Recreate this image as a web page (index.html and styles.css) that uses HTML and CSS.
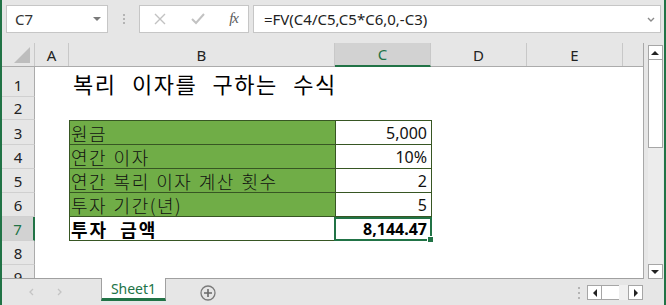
FILE: index.html
```html
<!DOCTYPE html>
<html>
<head>
    <title>복리 이자 - Excel</title>
    <link rel="stylesheet" href="styles.css">
</head>
<body>
    <div class="app">
        <div class="formula-bar">
            <div class="name-box">
                <span>C7</span>
                <svg class="name-drop" width="8" height="4" viewBox="0 0 8 4"><path d="M0 0h8L4 4z" fill="#7a7a7a"/></svg>
            </div>
            <div class="grip"><i></i><i></i><i></i></div>
            <div class="fx-box">
                <svg width="12" height="12" viewBox="0 0 12 12"><path d="M1 1l10 10M11 1L1 11" stroke="#c2c2c2" stroke-width="1.4" fill="none"/></svg>
                <svg width="14" height="12" viewBox="0 0 14 12"><path d="M1 6l4 4 8-9" stroke="#c2c2c2" stroke-width="2" fill="none"/></svg>
                <span class="fx">fx</span>
            </div>
            <div class="formula-input">
                <span>=FV(C4/C5,C5*C6,0,-C3)</span>
                <svg width="8" height="5" viewBox="0 0 8 5"><path d="M1 1l3 3 3-3" stroke="#8a8a8a" stroke-width="1.4" fill="none"/></svg>
            </div>
        </div>

        <div class="workspace">
            <div class="grid">
                <div class="col-heads">
                    <div class="corner"><span class="corner-tri"></span></div>
                    <div class="ch col-a">A</div>
                    <div class="ch col-b">B</div>
                    <div class="ch col-c active">C</div>
                    <div class="ch col-d">D</div>
                    <div class="ch col-e">E</div>
                    <div class="ch col-rest"></div>
                </div>

                <div class="row r1">
                    <div class="rh">1</div>
                    <div class="cell col-a"></div>
                    <div class="cell col-b title">복리 이자를 구하는 수식</div>
                </div>
                <div class="row r2">
                    <div class="rh">2</div>
                </div>
                <div class="row r3 first">
                    <div class="rh">3</div>
                    <div class="cell col-a"></div>
                    <div class="cell col-b label">원금</div>
                    <div class="cell col-c num">5,000</div>
                </div>
                <div class="row">
                    <div class="rh">4</div>
                    <div class="cell col-a"></div>
                    <div class="cell col-b label">연간 이자</div>
                    <div class="cell col-c num">10%</div>
                </div>
                <div class="row">
                    <div class="rh">5</div>
                    <div class="cell col-a"></div>
                    <div class="cell col-b label">연간 복리 이자 계산 횟수</div>
                    <div class="cell col-c num">2</div>
                </div>
                <div class="row">
                    <div class="rh">6</div>
                    <div class="cell col-a"></div>
                    <div class="cell col-b label">투자 기간(년)</div>
                    <div class="cell col-c num">5</div>
                </div>
                <div class="row">
                    <div class="rh active">7</div>
                    <div class="cell col-a"></div>
                    <div class="cell col-b result">투자 금액</div>
                    <div class="cell col-c num selected">8,144.47<span class="handle"></span></div>
                </div>
                <div class="row">
                    <div class="rh">8</div>
                </div>
                <div class="row">
                    <div class="rh">9</div>
                </div>
            </div>

            <div class="vscroll">
                <div class="sbtn"><svg width="8" height="4" viewBox="0 0 8 4"><path d="M0 4h8L4 0z" fill="#222"/></svg></div>
                <div class="vthumb"></div>
                <div class="vtrack"></div>
                <div class="sbtn"><svg width="8" height="4" viewBox="0 0 8 4"><path d="M0 0h8L4 4z" fill="#222"/></svg></div>
            </div>
        </div>

        <div class="tabbar">
            <div class="tab-nav">
                <svg width="5" height="8" viewBox="0 0 5 8"><path d="M4 1L1 4l3 3" stroke="#c4c4c4" stroke-width="1.3" fill="none"/></svg>
                <svg width="5" height="8" viewBox="0 0 5 8"><path d="M1 1l3 3-3 3" stroke="#c4c4c4" stroke-width="1.3" fill="none"/></svg>
            </div>
            <div class="tab">Sheet1</div>
            <svg class="add-sheet" width="16" height="16" viewBox="0 0 16 16">
                <circle cx="8" cy="8" r="7" stroke="#7a7a7a" stroke-width="1.3" fill="none"/>
                <path d="M8 4v8M4 8h8" stroke="#6a6a6a" stroke-width="1.6"/>
            </svg>
            <div class="spacer"></div>
            <div class="grip"><i></i><i></i><i></i></div>
            <div class="hscroll">
                <div class="sbtn"><svg width="4" height="8" viewBox="0 0 4 8"><path d="M4 0v8L0 4z" fill="#222"/></svg></div>
                <div class="hthumb"></div>
                <div class="htrack"></div>
                <div class="sbtn"><svg width="4" height="8" viewBox="0 0 4 8"><path d="M0 0v8l4-4z" fill="#222"/></svg></div>
            </div>
        </div>
    </div>
</body>
</html>
```

FILE: styles.css
```css
:root {
    --xl-green: #217346;
    --fill-green: #70ad47;
    --line-green: #375623;
    --chrome: #e6e6e6;
    --head-line: #c8c8c8;
    --box-line: #c6c6c6;
}

body {
    margin: 0;
    padding: 0;
    background: var(--chrome);
    font-family: "Noto Sans", "Open Sans", sans-serif;
    color: #222;
}

.app {
    width: 666px;
    height: 305px;
    box-sizing: border-box;
    border-left: 2px solid var(--xl-green);
    border-right: 2px solid var(--xl-green);
    overflow: hidden;
}

/* formula bar */
.formula-bar {
    height: 43px;
    box-sizing: border-box;
    padding: 5px 0 0 4px;
    display: flex;
    align-items: flex-start;
}

.name-box,
.fx-box,
.formula-input {
    height: 28px;
    box-sizing: border-box;
    background: #fff;
    border: 1px solid var(--box-line);
    display: flex;
    align-items: center;
}

.name-box {
    width: 102px;
    padding: 0 6px 0 8px;
    justify-content: space-between;
    font-size: 15px;
    color: #333;
}

.grip {
    width: 31px;
    display: flex;
    flex-direction: column;
    align-items: center;
    gap: 2px;
    padding-top: 9px;
}

.grip i {
    width: 2px;
    height: 2px;
    background: #b4b4b4;
}

.fx-box {
    width: 110px;
    padding: 0 10px 0 14px;
    justify-content: space-between;
}

.fx {
    font-family: "Liberation Serif", serif;
    font-style: italic;
    font-size: 15px;
    color: #5a5a5a;
    letter-spacing: -1px;
    margin-top: -2px;
}

.formula-input {
    width: 408px;
    margin-left: 4px;
    padding: 0 5px 0 10px;
    justify-content: space-between;
    font-size: 15px;
    color: #222;
}

/* sheet */
.workspace {
    display: flex;
    height: 236px;
}

.grid {
    width: 642px;
    height: 236px;
    box-sizing: border-box;
    border-right: 1px solid #a8a8a8;
    border-bottom: 1px solid #a0a0a0;
    background: #fff;
    overflow: hidden;
}

.col-heads {
    display: flex;
    height: 24px;
    background: var(--chrome);
    border-bottom: 1px solid #ababab;
    box-sizing: border-box;
}

.corner {
    width: 33px;
    box-sizing: border-box;
    border-right: 1px solid var(--head-line);
    position: relative;
}

.corner-tri {
    position: absolute;
    right: 4px;
    bottom: 3px;
    width: 0;
    height: 0;
    border-left: 16px solid transparent;
    border-bottom: 16px solid #bdbdbd;
}

.ch {
    box-sizing: border-box;
    border-right: 1px solid var(--head-line);
    display: flex;
    align-items: center;
    justify-content: center;
    font-size: 15px;
    color: #222;
}

.ch.col-a { width: 34px; }
.ch.col-b { width: 266px; }
.ch.col-c { width: 96px; }
.ch.col-d { width: 96px; }
.ch.col-e { width: 96px; }
.ch.col-rest { width: 20px; border-right: none; }

.ch.active {
    background: #d2d2d2;
    color: var(--xl-green);
    border-bottom: 2px solid var(--xl-green);
    margin-bottom: -1px;
}

.row {
    display: flex;
    height: 24px;
}

.row.r1 { height: 30px; }
.row.r2 { height: 23px; }
.row.r3 { height: 25px; }

.rh {
    width: 33px;
    box-sizing: border-box;
    background: var(--chrome);
    border-right: 1px solid #ababab;
    border-bottom: 1px solid #d0d0d0;
    display: flex;
    align-items: flex-end;
    justify-content: center;
    padding-bottom: 3px;
    font-size: 15px;
    line-height: 16px;
    color: #222;
}

.rh.active {
    background: #d2d2d2;
    color: var(--xl-green);
    border-right: 2px solid var(--xl-green);
}

.cell {
    box-sizing: border-box;
    display: flex;
    align-items: flex-end;
    white-space: nowrap;
}

.cell.col-a { width: 34px; }
.cell.col-b { width: 266px; }
.cell.col-c { width: 97px; }

.title {
    font-family: "Noto Sans CJK KR", sans-serif;
    font-size: 22px;
    line-height: 26px;
    word-spacing: 9px;
    letter-spacing: 1.5px;
    color: #000;
    padding-left: 4px;
    padding-bottom: 1px;
}

.label,
.result {
    font-family: "Noto Sans CJK KR", sans-serif;
    font-size: 18px;
    line-height: 22px;
    letter-spacing: 1.5px;
    word-spacing: 1px;
    padding-left: 1px;
    border-left: 1px solid var(--line-green);
    border-bottom: 1px solid var(--line-green);
    color: #111;
}

.label {
    background: var(--fill-green);
    font-weight: 300;
}

.result {
    background: #fff;
    font-weight: 700;
    word-spacing: 6px;
    letter-spacing: 2px;
    color: #000;
}

.first .label,
.first .num {
    border-top: 1px solid var(--line-green);
}

.num {
    justify-content: flex-end;
    font-family: "Noto Sans", sans-serif;
    font-size: 16px;
    line-height: 20px;
    padding: 0 4px 1px 0;
    border-left: 1px solid var(--line-green);
    border-right: 1px solid var(--line-green);
    border-bottom: 1px solid var(--line-green);
    color: #111;
}

.num.selected {
    position: relative;
    border: 2px solid var(--xl-green);
    margin-left: -1px;
    width: 98px;
    font-weight: 700;
    color: #000;
    padding-right: 3px;
    padding-bottom: 0;
}

.handle {
    position: absolute;
    right: -4px;
    bottom: -4px;
    width: 5px;
    height: 5px;
    background: var(--xl-green);
    border: 1px solid #fff;
}

/* vertical scrollbar */
.vscroll {
    width: 20px;
    display: flex;
    flex-direction: column;
    align-items: center;
    padding: 2px 0 0 2px;
    box-sizing: border-box;
}

.sbtn {
    width: 15px;
    height: 15px;
    box-sizing: border-box;
    border: 1px solid #a6a6a6;
    background: #fff;
    display: flex;
    align-items: center;
    justify-content: center;
}

.vthumb {
    width: 15px;
    height: 88px;
    box-sizing: border-box;
    border: 1px solid #a6a6a6;
    border-top: none;
    background: #fff;
}

.vtrack {
    flex: 1;
    width: 15px;
    background: #ececec;
}

/* sheet tabs */
.tabbar {
    height: 27px;
    display: flex;
    align-items: flex-start;
}

.tab-nav {
    width: 99px;
    display: flex;
    gap: 23px;
    padding: 9px 0 0 27px;
    box-sizing: border-box;
}

.tab {
    width: 65px;
    height: 23px;
    margin-top: -1px;
    box-sizing: border-box;
    background: #fff;
    border-left: 1px solid #a0a0a0;
    border-right: 1px solid #a0a0a0;
    border-bottom: 3px solid var(--xl-green);
    color: var(--xl-green);
    font-size: 14px;
    display: flex;
    align-items: center;
    justify-content: center;
    padding-top: 1px;
}

.add-sheet {
    margin: 6px 0 0 34px;
}

.spacer {
    flex: 1;
}

.tabbar .grip {
    width: 16px;
    padding-top: 8px;
    gap: 3px;
}

.hscroll {
    display: flex;
    margin: 6px 0 0 0;
    width: 56px;
}

.hthumb {
    width: 17px;
    height: 15px;
    box-sizing: border-box;
    border: 1px solid #a6a6a6;
    border-left: none;
    border-right: none;
    background: #fff;
}

.htrack {
    width: 9px;
    height: 15px;
    background: #f0f0f0;
}

.tabbar::after {
    content: "";
    width: 21px;
}
```
